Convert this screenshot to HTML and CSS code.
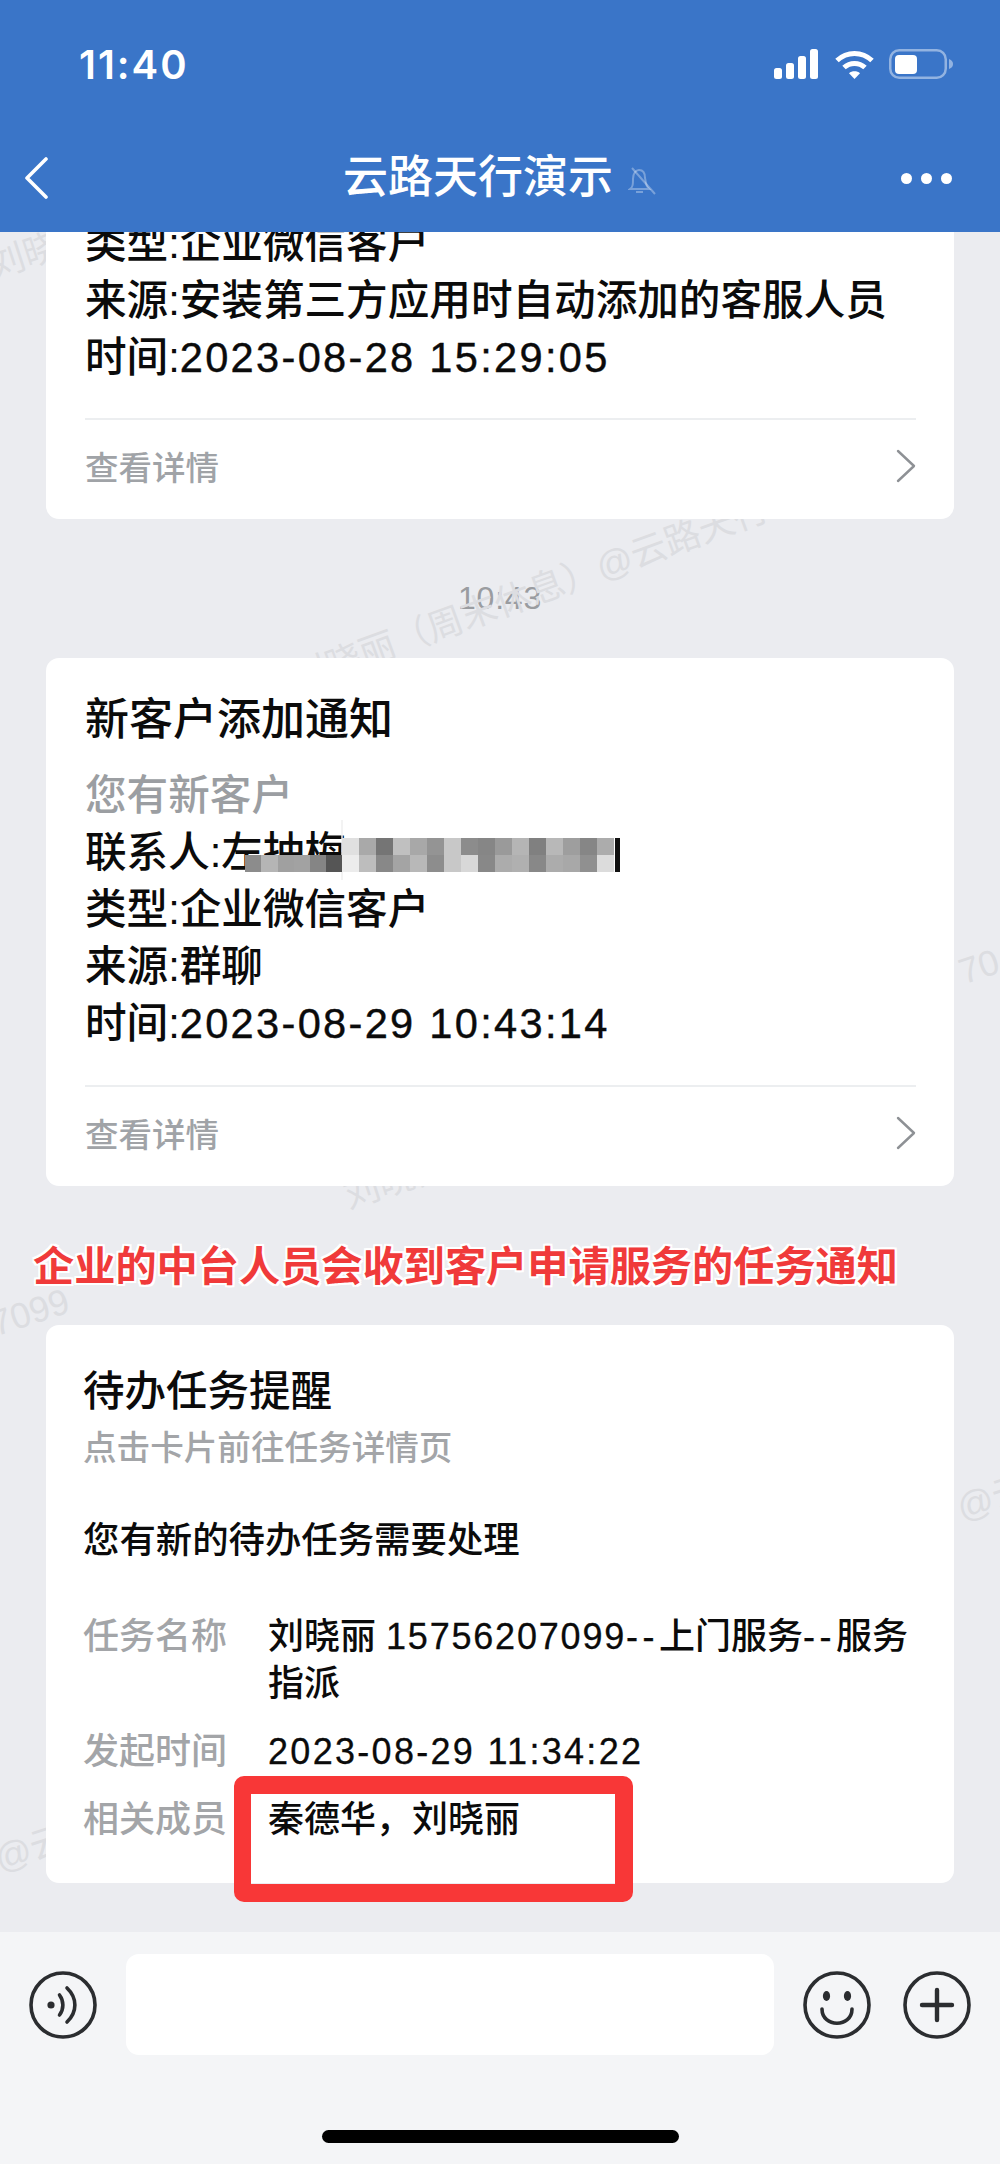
FILE: index.html
```html
<!DOCTYPE html>
<html lang="zh-CN">
<head>
    <meta charset="UTF-8">
    <meta name="viewport" content="width=device-width, initial-scale=1.0">
    <title>云路天行演示</title>
    <link rel="stylesheet" href="styles.css">
</head>
<body>
    <div class="phone">
        <header class="top">
            <div class="status">
                <span class="clock">11:40</span>
                <div class="status-icons">
                    <svg width="44" height="30" viewBox="0 0 44 30" fill="#fff">
                        <rect x="0" y="19" width="8" height="11" rx="2.5"/>
                        <rect x="12" y="14" width="8" height="16" rx="2.5"/>
                        <rect x="24" y="7" width="8" height="23" rx="2.5"/>
                        <rect x="36" y="0" width="8" height="30" rx="2.5"/>
                    </svg>
                    <svg class="wifi" width="41" height="31" viewBox="0 0 41 31" fill="none" stroke="#fff" stroke-width="5">
                        <path d="M3 11.5C13 2 28 2 38 11.5"/>
                        <path d="M10 18.5C16 13 25 13 31 18.5"/>
                        <path d="M15 24.2C18 21.6 23 21.6 26 24.2L20.5 30Z" fill="#fff" stroke="none"/>
                    </svg>
                    <svg width="64" height="30" viewBox="0 0 64 30">
                        <rect x="1.25" y="1.25" width="55.5" height="27.5" rx="9" fill="none" stroke="#fff" stroke-opacity=".45" stroke-width="2.5"/>
                        <rect x="6" y="6" width="22" height="19" rx="4" fill="#fff"/>
                        <path d="M60 10C63 11 64 13 64 15C64 17 63 19 60 20Z" fill="#fff" fill-opacity=".45"/>
                    </svg>
                </div>
            </div>
            <nav class="nav">
                <svg class="back" width="24" height="42" viewBox="0 0 24 42" fill="none" stroke="#fff" stroke-width="3.6" stroke-linecap="round" stroke-linejoin="round">
                    <path d="M22 2L3 21L22 40"/>
                </svg>
                <div class="nav-title">
                    <span>云路天行演示</span>
                    <svg width="29" height="28" viewBox="0 0 29 28" fill="none" stroke="#fff" stroke-opacity=".32" stroke-width="2">
                        <path d="M2 22C5 20 5 17 5 12C5 6 8 3 11 3C15 3 17 6 17 11L18 16C18 19 20 21 21 22Z"/>
                        <path d="M8 25H15"/>
                        <path d="M4 1L27 27"/>
                    </svg>
                </div>
                <div class="dots"><i></i><i></i><i></i></div>
            </nav>
        </header>

        <main class="chat">
            <span class="mark mark-a">刘晓丽（周末休息）@云路天行</span>
            <span class="mark mark-b">刘晓丽</span>
            <span class="mark mark-c">7099</span>
            <span class="mark mark-d">70</span>
            <span class="mark mark-e">@云</span>
            <span class="mark mark-f">@云</span>
            <span class="mark mark-g">刘晓</span>

            <section class="card card-cut">
                <div class="lines">
                    <p>类型:企业微信客户</p>
                    <p>来源:安装第三方应用时自动添加的客服人员</p>
                    <p>时间:<span class="num">2023-08-28 15:29:05</span></p>
                </div>
                <div class="more">
                    <span>查看详情</span>
                    <svg width="20" height="34" viewBox="0 0 20 34" fill="none" stroke="#8e9195" stroke-width="2.4" stroke-linecap="round" stroke-linejoin="round"><path d="M2 2L18 17L2 32"/></svg>
                </div>
            </section>

            <div class="stamp">10:43</div>

            <section class="card">
                <h3 class="card-title">新客户添加通知</h3>
                <div class="lines">
                    <p class="muted">您有新客户</p>
                    <p class="contact">联系人:左抽梅
                        <svg class="mosaic" width="376" height="60" viewBox="0 0 376 60">
                            <path d="M97 0V60" stroke="#efefef" stroke-width="1.5"/>
                            <g transform="translate(97 18)">
                                <rect x="0" width="17" height="17" fill="#e0e0e0"/>
                                <rect x="17" width="17" height="17" fill="#a9a9a9"/>
                                <rect x="34" width="17" height="17" fill="#757575"/>
                                <rect x="51" width="17" height="17" fill="#c0c0c0"/>
                                <rect x="68" width="17" height="17" fill="#a8a8a8"/>
                                <rect x="85" width="17" height="17" fill="#949494"/>
                                <rect x="102" width="17" height="17" fill="#c8c8c8"/>
                                <rect x="119" width="17" height="17" fill="#8c8c8c"/>
                                <rect x="136" width="17" height="17" fill="#868686"/>
                                <rect x="153" width="17" height="17" fill="#9a9a9a"/>
                                <rect x="170" width="17" height="17" fill="#b5b5b5"/>
                                <rect x="187" width="17" height="17" fill="#808080"/>
                                <rect x="204" width="17" height="17" fill="#b8b8b8"/>
                                <rect x="221" width="17" height="17" fill="#9e9e9e"/>
                                <rect x="238" width="17" height="17" fill="#868686"/>
                                <rect x="255" width="17" height="17" fill="#acacac"/>
                            </g>
                            <g transform="translate(0 35)">
                                <rect x="0" width="16" height="17" fill="#8c8c8c"/>
                                <rect x="16" width="17" height="17" fill="#b5b5b5"/>
                                <rect x="33" width="16" height="17" fill="#a0a0a0"/>
                                <rect x="49" width="16" height="17" fill="#a2a2a2"/>
                                <rect x="65" width="16" height="17" fill="#858585"/>
                                <rect x="81" width="16" height="17" fill="#555555"/>
                                <rect x="97" width="17" height="17" fill="#ececec"/>
                                <rect x="114" width="17" height="17" fill="#bdbdbd"/>
                                <rect x="131" width="17" height="17" fill="#888888"/>
                                <rect x="148" width="17" height="17" fill="#a4a4a4"/>
                                <rect x="165" width="17" height="17" fill="#b8b8b8"/>
                                <rect x="182" width="17" height="17" fill="#8d8d8d"/>
                                <rect x="199" width="17" height="17" fill="#c8c8c8"/>
                                <rect x="216" width="17" height="17" fill="#d8d8d8"/>
                                <rect x="233" width="17" height="17" fill="#888888"/>
                                <rect x="250" width="17" height="17" fill="#acacac"/>
                                <rect x="267" width="17" height="17" fill="#b0b0b0"/>
                                <rect x="284" width="17" height="17" fill="#888888"/>
                                <rect x="301" width="17" height="17" fill="#acacac"/>
                                <rect x="318" width="17" height="17" fill="#a8a8a8"/>
                                <rect x="335" width="17" height="17" fill="#909090"/>
                                <rect x="352" width="17" height="17" fill="#dcdcdc"/>
                            </g>
                            <rect x="370" y="18" width="5" height="34" fill="#111"/>
                        </svg>
                    </p>
                    <p>类型:企业微信客户</p>
                    <p>来源:群聊</p>
                    <p>时间:<span class="num">2023-08-29 10:43:14</span></p>
                </div>
                <div class="more">
                    <span>查看详情</span>
                    <svg width="20" height="34" viewBox="0 0 20 34" fill="none" stroke="#8e9195" stroke-width="2.4" stroke-linecap="round" stroke-linejoin="round"><path d="M2 2L18 17L2 32"/></svg>
                </div>
            </section>

            <div class="note">企业的中台人员会收到客户申请服务的任务通知</div>

            <section class="card task">
                <h3 class="task-title">待办任务提醒</h3>
                <div class="task-sub">点击卡片前往任务详情页</div>
                <div class="task-msg">您有新的待办任务需要处理</div>
                <div class="task-rows">
                    <span class="label">任务名称</span>
                    <span class="value">刘晓丽 <span class="phone-no">15756207099</span><span class="dash">--</span>上门服务<span class="dash">--</span>服务指派</span>
                    <span class="label">发起时间</span>
                    <span class="value"><span class="num-sm">2023-08-29 11:34:22</span></span>
                    <span class="label">相关成员</span>
                    <span class="value">秦德华，刘晓丽</span>
                </div>
            </section>
            <div class="red-box"></div>
        </main>

        <footer class="bottom">
            <div class="input-row">
                <svg class="round" width="70" height="70" viewBox="0 0 70 70" fill="none" stroke="#2b2d30" stroke-width="3.6" stroke-linecap="round">
                    <circle cx="35" cy="35" r="32"/>
                    <circle cx="23" cy="35" r="3.6" fill="#2b2d30" stroke="none"/>
                    <path d="M31.5 25C36 31 36 39 31.5 45"/>
                    <path d="M39 18C49.5 28 49.5 42 39 52"/>
                </svg>
                <div class="text-box"></div>
                <svg class="round" width="70" height="70" viewBox="0 0 70 70" fill="none" stroke="#2b2d30" stroke-width="3.6" stroke-linecap="round">
                    <circle cx="35" cy="35" r="32"/>
                    <ellipse cx="24.5" cy="26" rx="3.6" ry="5" fill="#2b2d30" stroke="none"/>
                    <ellipse cx="45.5" cy="26" rx="3.6" ry="5" fill="#2b2d30" stroke="none"/>
                    <path d="M20 39C20 58 50 58 50 39"/>
                </svg>
                <svg class="round" width="70" height="70" viewBox="0 0 70 70" fill="none" stroke="#2b2d30" stroke-width="3.6" stroke-linecap="round">
                    <circle cx="35" cy="35" r="32"/>
                    <path d="M20 35H50M35 20V50" stroke-width="4.4"/>
                </svg>
            </div>
            <div class="home-bar"></div>
        </footer>
    </div>
</body>
</html>
```

FILE: styles.css
```css
* {
    box-sizing: border-box;
}
body {
    margin: 0;
    font-family: "Liberation Sans", "Noto Sans CJK SC", sans-serif;
    font-weight: 500;
    color: #0b0b0b;
    background: #ebecf0;
}
p, h3 {
    margin: 0;
    font-weight: 500;
}
.phone {
    width: 1000px;
    height: 2164px;
    display: flex;
    flex-direction: column;
    overflow: hidden;
}

/* top bar */
.top {
    height: 232px;
    flex: none;
    background: #3a75c8;
    color: #ffffff;
    position: relative;
    z-index: 3;
}
.status {
    height: 128px;
    padding: 0 47px 0 79px;
    display: flex;
    align-items: center;
    justify-content: space-between;
}
.clock {
    font-family: "Inter", sans-serif;
    font-weight: 600;
    font-size: 40px;
    letter-spacing: 2px;
}
.status-icons {
    display: flex;
    align-items: center;
    gap: 14px;
}
.wifi {
    margin-left: 2px;
}
.nav {
    height: 100px;
    padding: 0 24px;
    display: grid;
    grid-template-columns: 1fr auto 1fr;
    align-items: center;
}
.nav-title {
    display: flex;
    align-items: center;
    gap: 15px;
    font-size: 45px;
    line-height: 60px;
}
.nav-title svg {
    margin-top: 6px;
}
.dots {
    justify-self: end;
    display: flex;
    gap: 9px;
    margin-right: 24px;
}
.dots i {
    width: 11px;
    height: 11px;
    border-radius: 50%;
    background: #ffffff;
}

/* chat area */
.chat {
    flex: 1;
    position: relative;
    overflow: hidden;
}
.card {
    margin: 0 46px;
    padding: 32px 38px 0 39px;
    background: #ffffff;
    border-radius: 13px;
    position: relative;
    z-index: 1;
}
.card-cut {
    margin-top: -17px;
    padding-top: 0;
}
.card-cut .lines {
    padding-bottom: 32px;
}
.card-title {
    font-size: 44px;
    line-height: 60px;
    margin-bottom: 17px;
}
.lines {
    font-size: 41.6px;
    line-height: 57px;
    white-space: nowrap;
    padding-bottom: 33px;
    border-bottom: 2px solid #eceef0;
}
.num {
    letter-spacing: 2.3px;
    -webkit-text-stroke: .4px #0b0b0b;
}
.muted {
    color: #9b9ea2;
}
.contact {
    position: relative;
}
.mosaic {
    position: absolute;
    left: 160px;
    top: -4px;
}
.more {
    height: 99px;
    padding-bottom: 8px;
    display: flex;
    align-items: center;
    justify-content: space-between;
    font-size: 33.5px;
    color: #a0a3a7;
}
.stamp {
    height: 139px;
    padding-top: 59px;
    text-align: center;
    font-size: 32px;
    letter-spacing: .8px;
    line-height: 40px;
    color: #9a9ca0;
}
.note {
    height: 139px;
    padding: 61px 0 0 33px;
    font-size: 41.2px;
    line-height: 40px;
    font-weight: 700;
    color: #f03a3a;
    position: relative;
    z-index: 1;
    text-shadow: 2px 0 #fff, -2px 0 #fff, 0 2px #fff, 0 -2px #fff, 2px 2px #fff, -2px -2px #fff, 2px -2px #fff, -2px 2px #fff;
}

/* task card */
.task {
    padding: 39px 38px 40px 37px;
}
.task-title {
    font-size: 41.5px;
    line-height: 56px;
}
.task-sub {
    margin-top: 7px;
    font-size: 33.6px;
    line-height: 44px;
    color: #a3a5a8;
}
.task-msg {
    margin-top: 45px;
    font-size: 36.4px;
    line-height: 50px;
}
.task-rows {
    margin-top: 47px;
    display: grid;
    grid-template-columns: 185px 1fr;
    row-gap: 21px;
    font-size: 36px;
    line-height: 47px;
}
.label {
    color: #a3a5a8;
}
.num-sm {
    letter-spacing: 2.3px;
    -webkit-text-stroke: .3px #0b0b0b;
}
.phone-no {
    letter-spacing: 1.8px;
    -webkit-text-stroke: .3px #0b0b0b;
}
.dash {
    letter-spacing: 4.5px;
    -webkit-text-stroke: .3px #0b0b0b;
}

/* annotation over the members row */
.red-box {
    position: absolute;
    left: 234px;
    top: 1544px;
    width: 399px;
    height: 126px;
    border: 18px solid #f83737;
    border-left-width: 17px;
    border-radius: 10px;
    z-index: 2;
}

/* watermark behind the cards */
.mark {
    position: absolute;
    font-size: 36px;
    font-weight: 400;
    line-height: 40px;
    color: #dcdde1;
    white-space: nowrap;
    transform: rotate(-18deg);
    transform-origin: left center;
}
.mark-a {
    left: 293px;
    top: 428px;
    transform: rotate(-20deg);
}
.mark-b {
    left: 345px;
    top: 945px;
}
.mark-c {
    left: -8px;
    top: 1073px;
}
.mark-d {
    left: 960px;
    top: 721px;
}
.mark-e {
    left: 958px;
    top: 1257px;
}
.mark-f {
    left: -4px;
    top: 1608px;
}
.mark-g {
    left: -10px;
    top: 15px;
}

/* input bar */
.bottom {
    height: 232px;
    flex: none;
    background: #f4f5f7;
    position: relative;
    z-index: 3;
}
.input-row {
    height: 146px;
    padding: 22px 28px 0;
    display: flex;
    align-items: flex-start;
}
.round {
    flex: none;
    margin-top: 16px;
}
.text-box {
    width: 648px;
    height: 101px;
    margin: 0 28px;
    background: #ffffff;
    border-radius: 13px;
}
.input-row .round:last-child {
    margin-left: 30px;
}
.home-bar {
    width: 357px;
    height: 13px;
    margin: 52px auto 0;
    background: #000000;
    border-radius: 7px;
}
```
